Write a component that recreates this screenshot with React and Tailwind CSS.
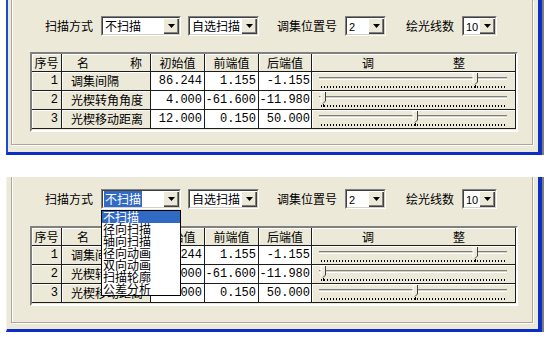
const ROWS = [
  { n: 1, name: '调集间隔', a: '86.244', b: '1.155', c: '-1.155', pos: 162 },
  { n: 2, name: '光楔转角角度', a: '4.000', b: '-61.600', c: '-11.980', pos: 10 },
  { n: 3, name: '光楔移动距离', a: '12.000', b: '0.150', c: '50.000', pos: 102 },
];

const SCAN_MODES = ['不扫描', '径向扫描', '轴向扫描', '径向动画', '双向动画', '扫描轮廓', '公差分析'];

const CJK = "font-['Noto_Sans_CJK_SC','Liberation_Sans',sans-serif]";
const MONO = "font-['Liberation_Mono','Noto_Sans_CJK_SC',monospace]";

function Arrow() {
  return (
    <div className="w-[16px] h-[16px] bg-[#ECE9D8] flex items-center justify-center shadow-[inset_1px_1px_0_#fff,inset_-1px_-1px_0_#404040,inset_-2px_-2px_0_#808080]">
      <svg width="7" height="4" viewBox="0 0 7 4">
        <polygon points="0,0 7,0 3.5,4" fill="#000" />
      </svg>
    </div>
  );
}

function Combo({ width, children, open }) {
  return (
    <div className={`relative ${width} h-[20px]`}>
      <div className="h-full flex border border-t-[#808080] border-l-[#808080] border-r-white border-b-white">
        <div className="flex-1 flex items-center bg-white border border-t-[#404040] border-l-[#404040] border-r-[#D4D0C8] border-b-[#D4D0C8] pl-[1px] overflow-hidden">
          <div className="flex-1 min-w-0 text-[12px] leading-none whitespace-nowrap">{children}</div>
          <Arrow />
        </div>
      </div>
      {open && (
        <div className={`absolute left-0 top-[21px] w-full z-10 bg-white border border-black ${CJK}`}>
          {SCAN_MODES.map((m, i) => (
            <div
              key={m}
              className={`h-[12px] text-[12px] leading-[12px] pl-[1px] whitespace-nowrap ${i === 0 ? 'bg-[#316AC5] text-white' : 'text-black'}`}
            >
              {m}
            </div>
          ))}
        </div>
      )}
    </div>
  );
}

function Slider({ pos }) {
  const ticks = [];
  for (let x = 9; x <= 194; x += 3) ticks.push(x);
  return (
    <svg width="203" height="18" viewBox="0 0 203 18">
      <rect x="7" y="5" width="188" height="1" fill="#808080" />
      <rect x="7" y="6" width="188" height="1" fill="#D4D0C8" />
      <rect x="7" y="7" width="188" height="1" fill="#fff" />
      {ticks.map((x) => (
        <rect key={x} x={x} y="14" width="1" height="2" fill="#000" />
      ))}
      <rect x={pos + 1} y="13" width="1" height="3" fill="#000" />
      <polygon points={`${pos - 1},1 ${pos + 3},1 ${pos + 3},10 ${pos + 1},12 ${pos - 1},10`} fill="#ECE9D8" />
      <polyline points={`${pos - 1},11 ${pos - 1},1 ${pos + 3},1`} fill="none" stroke="#fff" strokeWidth="1" />
      <polyline points={`${pos + 3.5},1 ${pos + 3.5},10 ${pos + 1},12.5`} fill="none" stroke="#404040" strokeWidth="1" />
    </svg>
  );
}

const headCell = 'h-[18px] border-r border-b border-[#1c1c1c] bg-[#ECE9D8] shadow-[inset_1px_1px_0_#fff] flex items-center';
const bodyCell = 'h-[19px] border-r border-b border-[#1c1c1c] flex items-center';

function Grid() {
  return (
    <div className={`ml-[18px] w-[488px] h-[80px] bg-[#ECE9D8] border-2 border-t-[#808080] border-l-[#808080] border-r-white border-b-white overflow-hidden ${CJK} text-[12px] leading-none text-black`}>
      <div className="flex">
        <div className={`${headCell} w-[30px] justify-center`}>序号</div>
        <div className={`${headCell} w-[89px] justify-between pl-[15px] pr-[8px]`}>
          <span>名</span>
          <span>称</span>
        </div>
        <div className={`${headCell} w-[54px] justify-center`}>初始值</div>
        <div className={`${headCell} w-[54px] justify-center`}>前端值</div>
        <div className={`${headCell} w-[53px] justify-center`}>后端值</div>
        <div className={`${headCell} w-[204px] justify-between px-[50px]`}>
          <span>调</span>
          <span>整</span>
        </div>
      </div>
      {ROWS.map((r) => (
        <div key={r.n} className="flex">
          <div className={`${bodyCell} w-[30px] justify-end pr-[3px] bg-[#ECE9D8] shadow-[inset_1px_1px_0_#fff] ${MONO}`}>{r.n}</div>
          <div className={`${bodyCell} w-[89px] pl-[9px] bg-[#ECE9D8] shadow-[inset_1px_1px_0_#fff] whitespace-nowrap`}>{r.name}</div>
          <div className={`${bodyCell} w-[54px] justify-end pr-[2px] bg-white ${MONO}`}>{r.a}</div>
          <div className={`${bodyCell} w-[54px] justify-end pr-[2px] bg-white ${MONO}`}>{r.b}</div>
          <div className={`${bodyCell} w-[53px] justify-end pr-[1px] bg-white ${MONO} whitespace-nowrap overflow-hidden`}>{r.c}</div>
          <div className={`${bodyCell} w-[204px] bg-[#ECE9D8] shadow-[inset_1px_1px_0_#fff]`}>
            <Slider pos={r.pos} />
          </div>
        </div>
      ))}
    </div>
  );
}

function Controls({ open }) {
  return (
    <div className={`flex items-center h-[20px] ml-[33px] ${CJK} text-[12px] leading-none text-black`}>
      <span className="w-[48px] whitespace-nowrap">扫描方式</span>
      <div className="ml-[8px]">
        <Combo width="w-[80px]" open={open}>
          {open ? <span className="bg-[#316AC5] text-white px-[1px]">不扫描</span> : <span className="px-[1px]">不扫描</span>}
        </Combo>
      </div>
      <div className="ml-[7px]">
        <Combo width="w-[71px]">
          <span className="px-[1px]">自选扫描</span>
        </Combo>
      </div>
      <span className="ml-[18px] w-[60px] whitespace-nowrap">调集位置号</span>
      <div className="ml-[8px]">
        <Combo width="w-[41px]">
          <span className="px-[1px] font-['Liberation_Sans',sans-serif] text-[11px]">2</span>
        </Combo>
      </div>
      <span className="ml-[20px] w-[48px] whitespace-nowrap">绘光线数</span>
      <div className="ml-[8px]">
        <Combo width="w-[35px]">
          <span className="px-[1px] font-['Liberation_Sans',sans-serif] text-[11px]">10</span>
        </Combo>
      </div>
    </div>
  );
}

function Panel({ open }) {
  return (
    <div
      className={`ml-[6px] w-[536px] h-[155px] bg-[#ECE9D8] border-r-4 border-r-[#0B2FC6] border-b-[3px] border-b-[#0B2FC6] shadow-[2px_0_0_#7f7f7f] ${open ? 'border-l border-l-[#F4F3EE]' : 'border-l-2 border-l-[#1B4AD8]'}`}
    >
      <div
        className={`${open ? 'ml-[4px] pt-[12px] pb-[16px]' : 'ml-[3px] pt-[16px] pb-[12px]'} w-[522px] border-l border-r border-b border-[#ACA899] shadow-[1px_1px_0_#fff,inset_1px_0_0_#fff]`}
      >
        <Controls open={open} />
        <div className={open ? 'mt-[17px]' : 'mt-[16px]'}>
          <Grid />
        </div>
      </div>
    </div>
  );
}

export default function App() {
  return (
    <div className="w-[548px] h-[337px] bg-white overflow-hidden">
      <Panel />
      <div className="h-[22px]" />
      <Panel open />
    </div>
  );
}
